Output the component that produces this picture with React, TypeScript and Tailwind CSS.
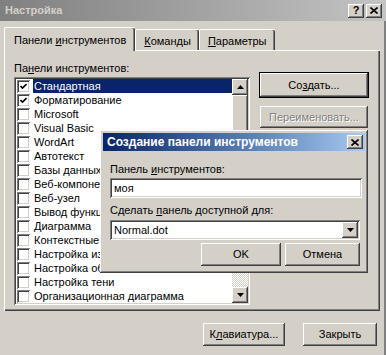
import React from 'react';

const raised =
  'shadow-[inset_-1px_-1px_#404040,inset_1px_1px_#ffffff,inset_-2px_-2px_#808080,inset_2px_2px_#d4d0c8]';
const sunken =
  'shadow-[inset_1px_1px_#808080,inset_-1px_-1px_#ffffff,inset_2px_2px_#404040,inset_-2px_-2px_#d4d0c8]';

type Row = { name: string; checked: boolean };

const rows: Row[] = [
  { name: 'Стандартная', checked: true },
  { name: 'Форматирование', checked: true },
  { name: 'Microsoft', checked: false },
  { name: 'Visual Basic', checked: false },
  { name: 'WordArt', checked: false },
  { name: 'Автотекст', checked: false },
  { name: 'Базы данных', checked: false },
  { name: 'Веб-компоненты', checked: false },
  { name: 'Веб-узел', checked: false },
  { name: 'Вывод функций', checked: false },
  { name: 'Диаграмма', checked: false },
  { name: 'Контекстные меню', checked: false },
  { name: 'Настройка изображения', checked: false },
  { name: 'Настройка объема', checked: false },
  { name: 'Настройка тени', checked: false },
  { name: 'Организационная диаграмма', checked: false },
];

const Check = ({ on }: { on: boolean }) => (
  <div className={`w-[13px] h-[13px] bg-white shrink-0 flex items-center justify-center ${sunken}`}>
    {on && (
      <svg width="7" height="7" viewBox="0 0 7 7">
        <path d="M0.5 3 L2.5 5 L6.5 1" stroke="#000" strokeWidth="1.6" fill="none" />
      </svg>
    )}
  </div>
);

const Arrow = ({ down }: { down?: boolean }) => (
  <svg width="7" height="4" viewBox="0 0 7 4">
    {down ? <polygon points="0,0 7,0 3.5,4" fill="#000" /> : <polygon points="0,4 7,4 3.5,0" fill="#000" />}
  </svg>
);

const Btn = ({ children, w, h = 'h-[23px]', extra = '' }: { children: React.ReactNode; w: string; h?: string; extra?: string }) => (
  <div className={`${w} ${h} bg-[#d4d0c8] flex items-center justify-center ${raised} ${extra}`}>{children}</div>
);

const CloseGlyph = () => (
  <svg width="8" height="7" viewBox="0 0 8 7">
    <path d="M0.5 0.5 L7.5 6.5 M7.5 0.5 L0.5 6.5" stroke="#000" strokeWidth="1.6" />
  </svg>
);

const App = () => {
  return (
    <div className="relative w-[386px] h-[355px] bg-[#d4d0c8] overflow-hidden font-['Liberation_Sans',sans-serif] text-[11px] text-black shadow-[inset_-2px_0_#808080]">
      {/* title bar */}
      <div className="h-[21px] flex items-center justify-between pl-[5px] pr-[4px] bg-linear-to-r from-[#808080] to-[#c4c4c4]">
        <span className="font-bold text-[#d4d0c8] text-[11px]">Настройка</span>
        <div className="flex gap-[2px]">
          <div className={`w-[16px] h-[14px] bg-[#d4d0c8] flex items-center justify-center font-bold text-[11px] leading-none ${raised}`}>?</div>
          <div className={`w-[16px] h-[14px] bg-[#d4d0c8] flex items-center justify-center ${raised}`}>
            <CloseGlyph />
          </div>
        </div>
      </div>

      {/* tabs */}
      <div className="flex items-end pl-[4px] mt-[5px] h-[24px]">
        <div className="relative z-10 h-[24px] px-[9px] pt-[4px] bg-[#d4d0c8] border-t border-l border-white shadow-[inset_-1px_0_#404040,inset_-2px_0_#808080] rounded-t-[2px] -mb-px">
          Панели <u>и</u>нструментов
        </div>
        <div className="h-[21px] px-[8px] pt-[3px] border-t border-l border-white shadow-[inset_-1px_0_#404040,inset_-2px_0_#808080] rounded-t-[2px]">
          <u>К</u>оманды
        </div>
        <div className="h-[21px] px-[8px] pt-[3px] border-t border-l border-white shadow-[inset_-1px_0_#404040,inset_-2px_0_#808080] rounded-t-[2px]">
          <u>П</u>араметры
        </div>
      </div>

      {/* tab panel */}
      <div className="ml-[4px] mr-[6px] h-[261px] border-t border-l border-white shadow-[inset_-1px_-1px_#404040,inset_-2px_-2px_#808080] pl-[9px] pt-[9px]">
        <div className="h-[16px] leading-[16px]">
          Па<u>н</u>ели инструментов:
        </div>
        <div className="flex mt-[1px]">
          <div className={`w-[236px] h-[228px] bg-white p-[2px] flex ${sunken}`}>
            <div className="flex-1 flex flex-col overflow-hidden">
              {rows.map((r, i) => (
                <div key={r.name} className="h-[14px] flex items-center shrink-0">
                  <div className="pl-[1px] pr-[3px]">
                    <Check on={r.checked} />
                  </div>
                  <div className={`h-[14px] flex-1 flex items-center pl-[1px] whitespace-nowrap ${i === 0 ? 'bg-[#0a246a] text-white' : ''}`}>
                    {r.name}
                  </div>
                </div>
              ))}
            </div>
            <div className="w-[16px] flex flex-col">
              <div className={`h-[16px] bg-[#d4d0c8] flex items-center justify-center ${raised}`}>
                <Arrow />
              </div>
              <div className={`h-[60px] bg-[#d4d0c8] ${raised}`} />
              <div className="flex-1 bg-[repeating-conic-gradient(#ffffff_0_25%,#d4d0c8_0_50%)] bg-[length:2px_2px]" />
              <div className={`h-[16px] bg-[#d4d0c8] flex items-center justify-center ${raised}`}>
                <Arrow down />
              </div>
            </div>
          </div>
          <div className="ml-[10px] flex flex-col gap-[9px] -mt-[4px]">
            <Btn w="w-[108px]" h="h-[24px]" extra="outline outline-1 outline-black">
              Со<u>з</u>дать...
            </Btn>
            <Btn w="w-[108px]" h="h-[22px]">
              <span className="text-[#808080] [text-shadow:1px_1px_0_#ffffff]">Переименовать...</span>
            </Btn>
          </div>
        </div>
      </div>

      {/* bottom buttons */}
      <div className="flex justify-end gap-[18px] pr-[9px] mt-[12px]">
        <Btn w="w-[82px]" h="h-[23px]">
          К<u>л</u>авиатура...
        </Btn>
        <Btn w="w-[74px]" h="h-[23px]">
          Закрыть
        </Btn>
      </div>

      {/* sub dialog over content */}
      <div className={`absolute left-[100px] top-[130px] w-[268px] h-[143px] bg-[#d4d0c8] p-[3px] ${raised}`}>
        <div className="h-[18px] flex items-center justify-between pl-[4px] pr-[2px] bg-linear-to-r from-[#0a246a] to-[#a6caf0]">
          <span className="font-bold text-white text-[12px]">Создание панели инструментов</span>
          <div className={`w-[16px] h-[14px] bg-[#d4d0c8] flex items-center justify-center ${raised}`}>
            <CloseGlyph />
          </div>
        </div>
        <div className="pl-[7px] pr-[3px] text-[11px]">
          <div className="mt-[10px] h-[16px] leading-[16px]">
            Панель <u>и</u>нструментов:
          </div>
          <div className={`mt-[1px] w-[252px] h-[20px] bg-white flex items-center pl-[4px] ${sunken}`}>моя</div>
          <div className="mt-[4px] h-[16px] leading-[16px]">
            Сделать <u>п</u>анель доступной для:
          </div>
          <div className={`mt-[2px] w-[250px] h-[20px] bg-white flex items-center justify-between pl-[4px] pr-[2px] ${sunken}`}>
            <span>Normal.dot</span>
            <div className={`w-[16px] h-[16px] bg-[#d4d0c8] flex items-center justify-center ${raised}`}>
              <Arrow down />
            </div>
          </div>
          <div className="flex justify-end gap-[4px] mt-[3px] pr-[2px]">
            <Btn w="w-[80px]" h="h-[23px]">
              OK
            </Btn>
            <Btn w="w-[75px]" h="h-[23px]">
              Отмена
            </Btn>
          </div>
        </div>
      </div>
    </div>
  );
};

export default App;
